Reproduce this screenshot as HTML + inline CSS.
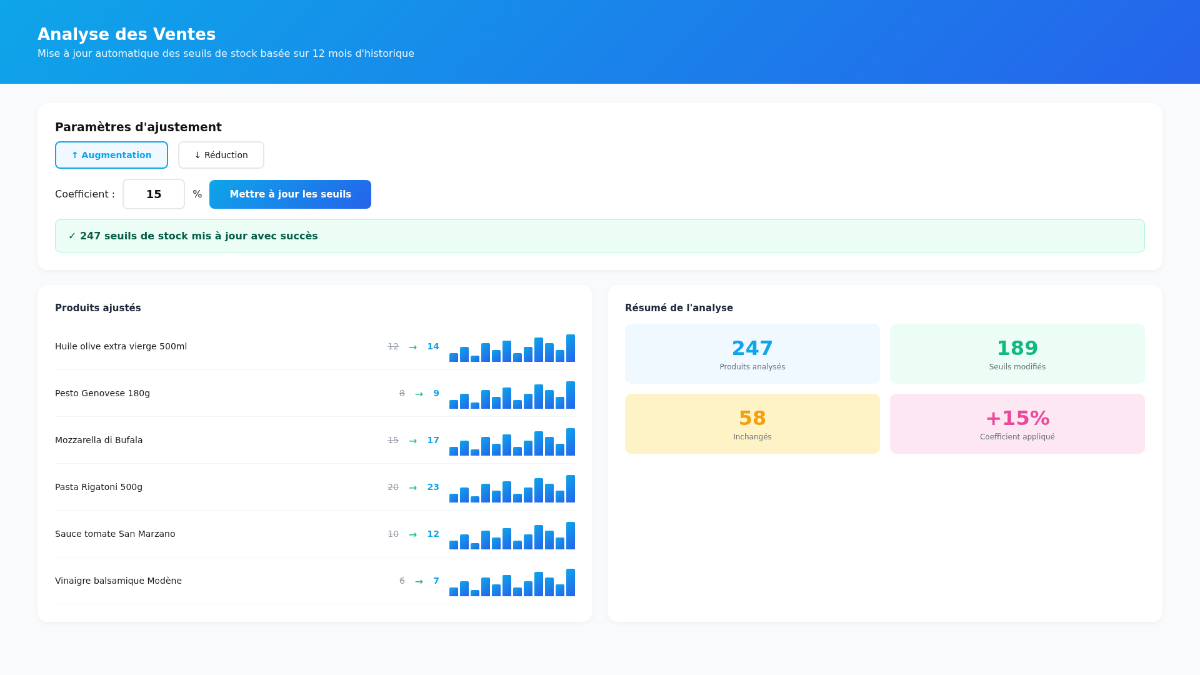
<!DOCTYPE html>
<html lang="fr">
<head>
<meta charset="utf-8">
<title>Analyse des Ventes</title>
<style>
*{box-sizing:border-box;margin:0;padding:0}
html,body{width:1200px;height:675px;overflow:hidden;background:#f8fafc}
body{font-family:"DejaVu Sans","Liberation Sans",sans-serif;color:#1a1a1a}
#stage{width:1920px;height:1080px;transform:scale(.625);transform-origin:0 0;will-change:transform;background:#f8fafc;position:relative;overflow:hidden}
header{height:134px;background:linear-gradient(135deg,#0ea5e9 0%,#2563eb 100%);color:#fff;padding:39.5px 60px 0}
header h1{font-size:26px;font-weight:700;margin-bottom:6.4px}
header p{font-size:16px;opacity:.9}
main{padding:31px 60px 0}
.card{background:#fff;border-radius:16px;padding:28px;box-shadow:0 2px 8px rgba(15,23,42,.05)}
.params h3{font-size:18.72px;font-weight:700;color:#111;margin-bottom:12px}
.modes{display:flex;gap:16px}
.btn{padding:12px 24px;border:2px solid #e5e7eb;border-radius:8px;background:#fff;font-size:14px;color:#1a1a1a;white-space:nowrap}
.btn.on{border-color:#0ea5e9;background:#f0f9ff;color:#0ea5e9;font-weight:700}
.coef{display:flex;align-items:center;gap:12px;margin-top:16px;font-size:16px}
.coef .inp{width:100px;padding:12px 0;border:2px solid #e5e7eb;border-radius:8px;font-size:18px;font-weight:700;text-align:center;background:#fff;color:#111}
.coef .go{padding:14px 32px;border-radius:8px;background:linear-gradient(135deg,#0ea5e9,#2563eb);color:#fff;font-size:15px;font-weight:700;white-space:nowrap}
.alert{margin-top:16px;border:1px solid #a7f3d0;background:#ecfdf5;border-radius:8px;padding:16px 20px;font-size:16px;font-weight:700;color:#065f46}
.grid{display:flex;gap:24px;margin-top:24px}
.grid .card{width:888px}
.grid h3{font-size:15px;font-weight:700;color:#1e293b;margin-bottom:15px}
.row{display:flex;align-items:center;padding:12px 0;border-bottom:1px solid #f1f5f9}
.row .name{flex:1;font-size:14px;color:#1a1a1a}
.vals{display:flex;align-items:center;gap:16px;margin-right:16px}
.old{font-size:14px;color:#979ea9;text-decoration:line-through}
.arr{font-size:16px;color:#10b981;position:relative;top:1.3px}
.new{font-size:14px;font-weight:700;color:#0ea5e9}
.chart{width:201px;height:50px;display:flex;align-items:flex-end;gap:3px}
.chart i{width:14px;display:block;border-radius:2px 2px 0 0;background:linear-gradient(135deg,#0ea5e9,#2563eb)}
.b1{height:14.5px}.b2{height:24px}.b3{height:9.6px}.b4{height:29.6px}.b5{height:19.5px}.b6{height:34.5px}.b7{height:39.2px}.b8{height:44.1px}
.stats{margin-top:16px;display:grid;grid-template-columns:408px 408px;gap:16px}
.stat{border-radius:10px;text-align:center;padding:20px}
.stat b{display:block;font-size:32px;font-weight:700}
.stat span{display:block;font-size:12px;margin-top:4px;color:#666e7a}
.s1{background:#f0f9ff}.s1 b{color:#0ea5e9}
.s2{background:#ecfdf5}.s2 b{color:#10b981}
.s3{background:#fef3c7}.s3 b{color:#f59e0b}
.s4{background:#fce7f3}.s4 b{color:#ec4899}
</style>
</head>
<body>
<div id="stage">
<header>
  <h1>Analyse des Ventes</h1>
  <p>Mise à jour automatique des seuils de stock basée sur 12 mois d'historique</p>
</header>
<main>
  <section class="card params">
    <h3>Paramètres d'ajustement</h3>
    <div class="modes">
      <div class="btn on">↑ Augmentation</div>
      <div class="btn">↓ Réduction</div>
    </div>
    <div class="coef">
      <span>Coefficient :</span>
      <div class="inp">15</div>
      <span>%</span>
      <div class="go">Mettre à jour les seuils</div>
    </div>
    <div class="alert">✓ 247 seuils de stock mis à jour avec succès</div>
  </section>
  <div class="grid">
    <section class="card">
      <h3>Produits ajustés</h3>
      <div class="row"><span class="name">Huile olive extra vierge 500ml</span><span class="vals"><span class="old">12</span><span class="arr">→</span><span class="new">14</span></span><span class="chart"><i class="b1"></i><i class="b2"></i><i class="b3"></i><i class="b4"></i><i class="b5"></i><i class="b6"></i><i class="b1"></i><i class="b2"></i><i class="b7"></i><i class="b4"></i><i class="b5"></i><i class="b8"></i></span></div>
      <div class="row"><span class="name">Pesto Genovese 180g</span><span class="vals"><span class="old">8</span><span class="arr">→</span><span class="new">9</span></span><span class="chart"><i class="b1"></i><i class="b2"></i><i class="b3"></i><i class="b4"></i><i class="b5"></i><i class="b6"></i><i class="b1"></i><i class="b2"></i><i class="b7"></i><i class="b4"></i><i class="b5"></i><i class="b8"></i></span></div>
      <div class="row"><span class="name">Mozzarella di Bufala</span><span class="vals"><span class="old">15</span><span class="arr">→</span><span class="new">17</span></span><span class="chart"><i class="b1"></i><i class="b2"></i><i class="b3"></i><i class="b4"></i><i class="b5"></i><i class="b6"></i><i class="b1"></i><i class="b2"></i><i class="b7"></i><i class="b4"></i><i class="b5"></i><i class="b8"></i></span></div>
      <div class="row"><span class="name">Pasta Rigatoni 500g</span><span class="vals"><span class="old">20</span><span class="arr">→</span><span class="new">23</span></span><span class="chart"><i class="b1"></i><i class="b2"></i><i class="b3"></i><i class="b4"></i><i class="b5"></i><i class="b6"></i><i class="b1"></i><i class="b2"></i><i class="b7"></i><i class="b4"></i><i class="b5"></i><i class="b8"></i></span></div>
      <div class="row"><span class="name">Sauce tomate San Marzano</span><span class="vals"><span class="old">10</span><span class="arr">→</span><span class="new">12</span></span><span class="chart"><i class="b1"></i><i class="b2"></i><i class="b3"></i><i class="b4"></i><i class="b5"></i><i class="b6"></i><i class="b1"></i><i class="b2"></i><i class="b7"></i><i class="b4"></i><i class="b5"></i><i class="b8"></i></span></div>
      <div class="row"><span class="name">Vinaigre balsamique Modène</span><span class="vals"><span class="old">6</span><span class="arr">→</span><span class="new">7</span></span><span class="chart"><i class="b1"></i><i class="b2"></i><i class="b3"></i><i class="b4"></i><i class="b5"></i><i class="b6"></i><i class="b1"></i><i class="b2"></i><i class="b7"></i><i class="b4"></i><i class="b5"></i><i class="b8"></i></span></div>
    </section>
    <section class="card">
      <h3>Résumé de l'analyse</h3>
      <div class="stats">
        <div class="stat s1"><b>247</b><span>Produits analysés</span></div>
        <div class="stat s2"><b>189</b><span>Seuils modifiés</span></div>
        <div class="stat s3"><b>58</b><span>Inchangés</span></div>
        <div class="stat s4"><b>+15%</b><span>Coefficient appliqué</span></div>
      </div>
    </section>
  </div>
</main>
</div>
</body>
</html>
